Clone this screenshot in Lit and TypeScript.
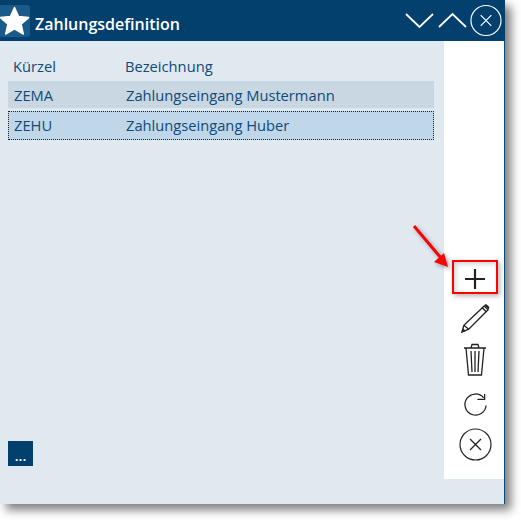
import { LitElement, html, css } from "lit";
import { customElement } from "lit/decorators.js";

@customElement("app-root")
export class AppRoot extends LitElement {
  static styles = css`
    :host { display: block; width: 521px; height: 520px; position: relative; overflow: hidden; background: #fff; font-family: "Open Sans", sans-serif; color: #0f4a78; }
    .win { width: 505px; height: 504px; box-sizing: border-box; border-right: 1px solid #0b4a78; display: flex; flex-direction: column; background: #e0e8f0; box-shadow: 6px 6px 9px rgba(0,0,0,.5); }
    .head { height: 41px; flex: none; background: #03406d; display: flex; align-items: center; color: #fff; margin-right: -1px; }
    .logo { width: 30px; height: 32px; margin: 5px 0 4px; background: #1a5a8a; border-radius: 0 3px 3px 0; display: flex; align-items: center; justify-content: center; flex: none; }
    .title { margin-left: 5px; font-size: 16px; font-weight: 600; line-height: 20px; flex: 1; padding-top: 6px; }
    .ctrl { display: flex; align-items: center; padding-right: 3px; }
    .ctrl svg { display: block; flex: none; }
    .ctrl .up { margin: 0 3px 0 4px; }
    .body { flex: 1; display: flex; min-height: 0; }
    .main { flex: 1; display: flex; flex-direction: column; padding: 15px 10px 38px 8px; }
    .cols { display: grid; grid-template-columns: 112px 1fr; padding-left: 5px; font-size: 14.7px; line-height: 20px; height: 25px; }
    .row { display: grid; grid-template-columns: 112px 1fr; padding-left: 6px; font-size: 14.7px; height: 27px; line-height: 29px; background: #c9d7e2; }
    .row.sel { background: #c0d7ea; height: 29px; margin-top: 3px; box-sizing: border-box; border: 1px dotted #222; padding-left: 5px; line-height: 27px; }
    .spacer { flex: 1; }
    .more { width: 25px; height: 25px; background: #03406d; color: #fff; font-size: 14px; font-weight: 600; display: flex; align-items: flex-end; justify-content: center; line-height: 20px; }
    .side { width: 60px; flex: none; background: #fff; margin-bottom: 25px; display: flex; flex-direction: column; align-items: center; justify-content: flex-end; padding-left: 2px; box-sizing: border-box; padding-bottom: 18px; }
    .side svg { display: block; flex: none; }
    .i-plus { margin-bottom: 13px; }
    .i-pen { margin-bottom: 9px; }
    .i-trash { margin-bottom: 17px; }
    .i-ref { margin-bottom: 10px; }
    .mark { position: absolute; left: 452px; top: 260px; width: 46px; height: 34px; box-sizing: border-box; border: 2px solid #f00; box-shadow: 2px 2px 5px rgba(0,0,0,.3), inset 2px 2px 5px rgba(0,0,0,.18); }
    .arrow { position: absolute; left: 410px; top: 222px; filter: drop-shadow(2px 2px 2px rgba(0,0,0,.35)); }
  `;

  render() {
    return html`
      <div class="win">
        <div class="head">
          <div class="logo">
            <svg width="30" height="30" viewBox="0 0 30 30"><path d="M14.5 1.5 L18.6 10.6 L28.6 11.6 L21.1 18.2 L23.3 28 L14.5 22.9 L5.7 28 L7.9 18.2 L.4 11.6 L10.4 10.6 Z" fill="#fff" stroke="#fff" stroke-width="1.5" stroke-linejoin="round"/></svg>
          </div>
          <div class="title">Zahlungsdefinition</div>
          <div class="ctrl">
            <svg width="29" height="17" viewBox="0 0 29 17"><path d="M1 2 L14.5 15 L28 2" fill="none" stroke="#fff" stroke-width="1.8"/></svg>
            <svg class="up" width="29" height="17" viewBox="0 0 29 17"><path d="M1 15 L14.5 2 L28 15" fill="none" stroke="#fff" stroke-width="1.8"/></svg>
            <svg width="32" height="33" viewBox="0 0 33 33"><circle cx="16.5" cy="16.5" r="15.5" fill="none" stroke="#fff" stroke-width="1.2"/><path d="M11 11 L22 22 M22 11 L11 22" stroke="#fff" stroke-width="1.2"/></svg>
          </div>
        </div>
        <div class="body">
          <div class="main">
            <div class="cols"><span>Kürzel</span><span>Bezeichnung</span></div>
            <div class="row"><span>ZEMA</span><span>Zahlungseingang Mustermann</span></div>
            <div class="row sel"><span>ZEHU</span><span>Zahlungseingang Huber</span></div>
            <div class="spacer"></div>
            <div class="more">...</div>
          </div>
          <div class="side">
            <svg class="i-plus" width="22" height="22" viewBox="0 0 22 22"><path d="M11 1 V21 M1 11 H21" stroke="#222" stroke-width="2.2"/></svg>
            <svg class="i-pen" width="31" height="31" viewBox="0 0 32 32"><path d="M2 30 L4 23 L25 3 L29 7 L9 27 Z M4 23 L9 27 M23 5 L27 9" fill="none" stroke="#222" stroke-width="1.4"/><path d="M1.5 30.5 L3 26 L6 29 Z M25 2 L27 1 L30.5 4.5 L29.5 6.5 Z" fill="#222"/></svg>
            <svg class="i-trash" width="24" height="33" viewBox="0 0 24 33"><path d="M1 5 H23 M8 5 L9 1.5 H15 L16 5 M3 5 L5.5 32 H18.5 L21 5 M8 8 L9 29 M12 8 V29 M16 8 L15 29" fill="none" stroke="#222" stroke-width="1.3"/></svg>
            <svg class="i-ref" width="25" height="25" viewBox="0 0 26 26"><path d="M21.5 5 A11 11 0 1 0 24 13" fill="none" stroke="#222" stroke-width="1.3"/><path d="M15 6.5 H22.5 V1" fill="none" stroke="#222" stroke-width="1.3"/></svg>
            <svg width="33" height="33" viewBox="0 0 33 33"><circle cx="16.5" cy="16.5" r="15.5" fill="none" stroke="#222" stroke-width="1.2"/><path d="M11 11 L22 22 M22 11 L11 22" stroke="#222" stroke-width="1.3"/></svg>
          </div>
        </div>
      </div>
      <svg class="arrow" width="46" height="50" viewBox="0 0 46 50"><path d="M4 4 L31 36" stroke="#f00" stroke-width="3"/><path d="M38 45 L24 40 L34 31 Z" fill="#f00"/></svg>
      <div class="mark"></div>
    `;
  }
}
